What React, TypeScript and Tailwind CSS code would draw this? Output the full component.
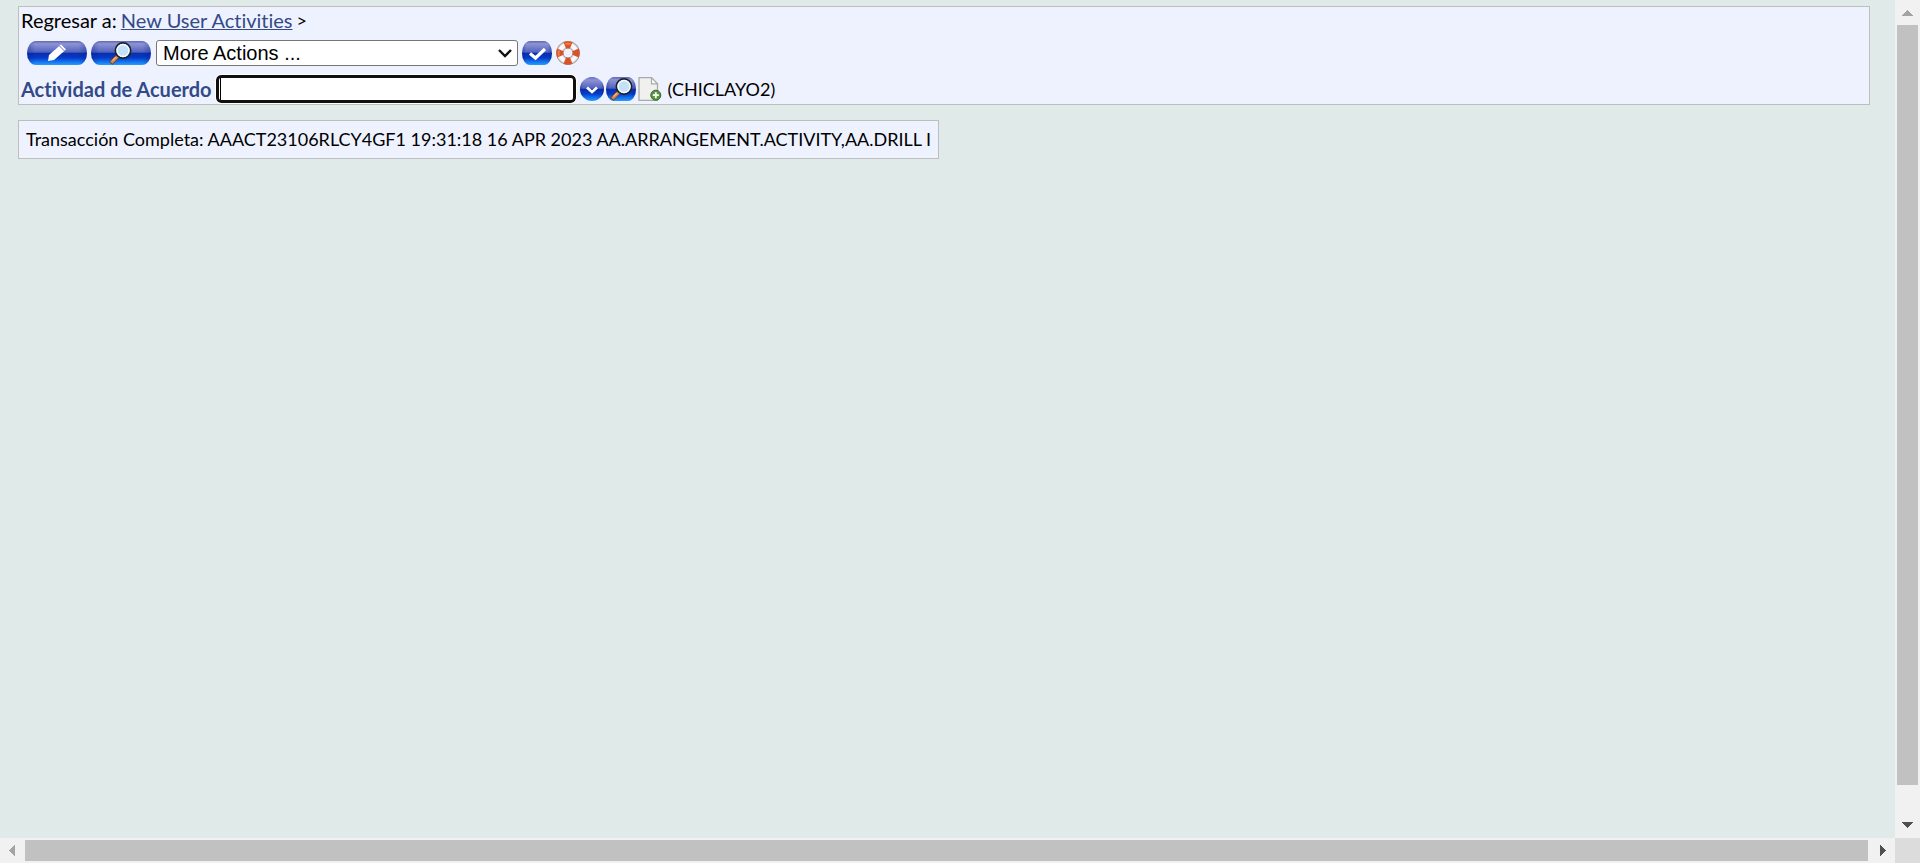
import { useId, type ReactNode } from "react";

function Glass({ width, round = 12, children }: { width: number; round?: number; children: ReactNode }) {
  const id = useId();
  return (
    <svg width={width} height={24} viewBox={`0 0 ${width} 24`} className="block" aria-hidden="true">
      <defs>
        <linearGradient id={id} x1="0" y1="0" x2="0" y2="1">
          <stop offset="0" stopColor="#5f66b6" />
          <stop offset="0.12" stopColor="#8e94d3" />
          <stop offset="0.46" stopColor="#5363bf" />
          <stop offset="0.52" stopColor="#0a2fae" />
          <stop offset="0.7" stopColor="#063ac6" />
          <stop offset="0.86" stopColor="#1272ee" />
          <stop offset="1" stopColor="#2a9cf8" />
        </linearGradient>
        <linearGradient id={id + "s"} x1="0" y1="0" x2="1" y2="0">
          <stop offset="0" stopColor="#001e8c" stopOpacity="0.35" />
          <stop offset="0.14" stopColor="#001e8c" stopOpacity="0" />
          <stop offset="0.86" stopColor="#001e8c" stopOpacity="0" />
          <stop offset="1" stopColor="#001e8c" stopOpacity="0.35" />
        </linearGradient>
      </defs>
      <rect width={width} height={24} rx={round} ry={12} fill={`url(#${id})`} />
      <rect width={width} height={24} rx={round} ry={12} fill={`url(#${id}s)`} />
      {children}
    </svg>
  );
}

function Magnifier({ x }: { x: number }) {
  return (
    <g transform={`translate(${x} 0)`}>
      <path d="M3.4 20.6 8.5 15.4" stroke="#6b3d24" strokeWidth="4.6" strokeLinecap="square" />
      <path d="M3.4 20.6 8 16" stroke="#d98950" strokeWidth="3" strokeLinecap="square" />
      <path d="M3.6 19.4 6.8 16.2" stroke="#f3c39a" strokeWidth="1.2" />
      <circle cx="14" cy="9.5" r="7.6" fill="#c3e1f7" stroke="#1d222b" strokeWidth="1.8" />
      <circle cx="14" cy="9.5" r="6" fill="none" stroke="#f4faff" strokeWidth="1.4" />
    </g>
  );
}

function IconButton({ label, children }: { label: string; children: ReactNode }) {
  return (
    <button type="button" aria-label={label} className="shrink-0 cursor-pointer">
      {children}
    </button>
  );
}

function LifeBuoy() {
  return (
    <svg width="24" height="24" viewBox="0 0 24 24" className="block" aria-hidden="true">
      <circle cx="12" cy="12" r="8.2" fill="none" stroke="#a39d9a" strokeWidth="7.4" />
      <circle cx="12" cy="12" r="8.2" fill="none" stroke="#dcd8d5" strokeWidth="5.8" />
      <circle cx="12" cy="12" r="8.2" fill="none" stroke="#fbfaf9" strokeWidth="3.8" />
      <g fill="none" stroke="#d9532a" strokeWidth="7">
        <path d="M8.8 4.45a8.2 8.2 0 0 1 6.4 0" />
        <path d="M19.55 8.8a8.2 8.2 0 0 1 0 6.4" />
        <path d="M15.2 19.55a8.2 8.2 0 0 1-6.4 0" />
        <path d="M4.45 15.2a8.2 8.2 0 0 1 0-6.4" />
      </g>
      <g fill="none" stroke="#ee7a4c" strokeWidth="2">
        <path d="M9.4 3a9.4 9.4 0 0 1 5.2 0" />
        <path d="M3 14.6a9.4 9.4 0 0 1 0-5.2" />
      </g>
    </svg>
  );
}

function NewDocument() {
  return (
    <svg width="24" height="24" viewBox="0 0 24 24" className="block" aria-hidden="true">
      <path d="M1 .7h12.5l6 6.2v16.4H1z" fill="#f0f1ee" stroke="#a9aba6" strokeWidth="1.3" />
      <path d="M13.5.7v6.2h6z" fill="#fff" stroke="#a9aba6" strokeWidth="1.2" />
      <circle cx="17.8" cy="18.2" r="5" fill="#5a9440" stroke="#35662a" strokeWidth="1" />
      <path d="M17.8 15.2v6M14.8 18.2h6" stroke="#fff" strokeWidth="1.8" />
    </svg>
  );
}

function Arrow({ d, dim = false }: { d: string; dim?: boolean }) {
  return (
    <svg width="25" height="25" viewBox="0 0 25 25" className="block shrink-0" aria-hidden="true">
      <path d={d} fill={dim ? "#a3a3a3" : "#505050"} />
    </svg>
  );
}

export default function App() {
  return (
    <div className="grid h-screen grid-cols-[minmax(0,1fr)_25px] grid-rows-[minmax(0,1fr)_25px] bg-[#e0ebe9] font-['Lato',sans-serif] text-[18px] text-black [font-variant-ligatures:none]">
      <main className="overflow-hidden pt-1.5 pr-[25px] pl-[18px] whitespace-nowrap">
        <header className="border border-[#bebebe] bg-[#eef2ff]">
          <nav className="flex h-7 items-center gap-1 pb-0.5 pl-0.5 text-[20px]">
            <span>Regresar a:</span>
            <a href="#activities" className="text-[#334a87] underline decoration-1">New User Activities</a>
            <span className="text-[18px]">&gt;</span>
          </nav>
          <div className="flex h-9 items-center gap-1 pl-2">
            <IconButton label="Editar">
              <Glass width={60} round={9}>
                <path d="m21 20 1-6L34 3.5l5 5L27 19z" fill="#fff" />
                <path d="m32.5 5 5 5" stroke="#6872bd" strokeWidth="1" />
              </Glass>
            </IconButton>
            <IconButton label="Ver">
              <Glass width={60} round={9}><Magnifier x={18} /></Glass>
            </IconButton>
            <div className="relative ml-px">
              <select aria-label="More Actions" className="block h-[26px] w-[362px] appearance-none rounded-[3px] border border-[#767676] bg-white pl-1.5 font-['Liberation_Sans',sans-serif] text-[20px] leading-6">
                <option>More Actions ...</option>
              </select>
              <svg width="14" height="9" viewBox="0 0 14 9" className="pointer-events-none absolute top-[9px] right-1.5" aria-hidden="true">
                <path d="m1 1 6 6 6-6" fill="none" stroke="#111" strokeWidth="2.4" />
              </svg>
            </div>
            <IconButton label="Validar">
              <Glass width={30} round={8}>
                <path d="m8 12.5 5.5 4.5L23 8" fill="none" stroke="#fff" strokeWidth="3.2" />
              </Glass>
            </IconButton>
            <IconButton label="Ayuda"><LifeBuoy /></IconButton>
          </div>
          <div className="flex h-[33px] items-center gap-0.5 pt-[3px] pl-0.5">
            <label htmlFor="activity" className="mr-0.5 text-[20px] font-bold text-[#334a87]">Actividad de Acuerdo</label>
            <div className="relative mr-0.5">
              <input id="activity" type="text" className="block h-7 w-[360px] rounded-[5px] border-[3px] border-[#101010] bg-white px-1 outline-1 outline-white" />
              <span className="absolute top-[3px] left-1 h-[22px] w-px bg-black" />
            </div>
            <IconButton label="Desplegar">
              <Glass width={24}>
                <path d="m7 10.5 5 4.5 5-4.5" fill="none" stroke="#fff" strokeWidth="2.6" />
              </Glass>
            </IconButton>
            <IconButton label="Buscar">
              <Glass width={30} round={8}><Magnifier x={4} /></Glass>
            </IconButton>
            <IconButton label="Nuevo"><NewDocument /></IconButton>
            <span className="ml-1">(CHICLAYO2)</span>
          </div>
        </header>
        <p className="mt-[15px] w-fit border border-[#bebebe] bg-[#eef2ff] px-[7px] leading-[37px]">
          Transacción Completa: AAACT23106RLCY4GF1 19:31:18 16 APR 2023 AA.ARRANGEMENT.ACTIVITY,AA.DRILL I
        </p>
      </main>
      <div className="flex flex-col bg-[#f1f1f1]">
        <Arrow dim d="M12 10h1v1h1v1h1v1h1v1h1v1h1v1H7v-1h1v-1h1v-1h1v-1h1v-1h1z" />
        <div className="mx-0.5 flex-1 bg-[#c1c1c1]" />
        <div className="h-7" />
        <Arrow d="M7 9h11v1h-1v1h-1v1h-1v1h-1v1h-1v1h-1v-1h-1v-1h-1v-1H9v-1H8v-1H7z" />
      </div>
      <div className="flex bg-[#f1f1f1]">
        <Arrow dim d="M15 7v11h-1v-1h-1v-1h-1v-1h-1v-1h-1v-1H9v-1h1v-1h1v-1h1V9h1V8h1V7z" />
        <div className="my-0.5 flex-1 bg-[#c1c1c1]" />
        <div className="w-0.5" />
        <Arrow d="M10 7h1v1h1v1h1v1h1v1h1v1h1v1h-1v1h-1v1h-1v1h-1v1h-1v1h-1z" />
      </div>
      <div className="bg-[#dcdcdc]" />
    </div>
  );
}
